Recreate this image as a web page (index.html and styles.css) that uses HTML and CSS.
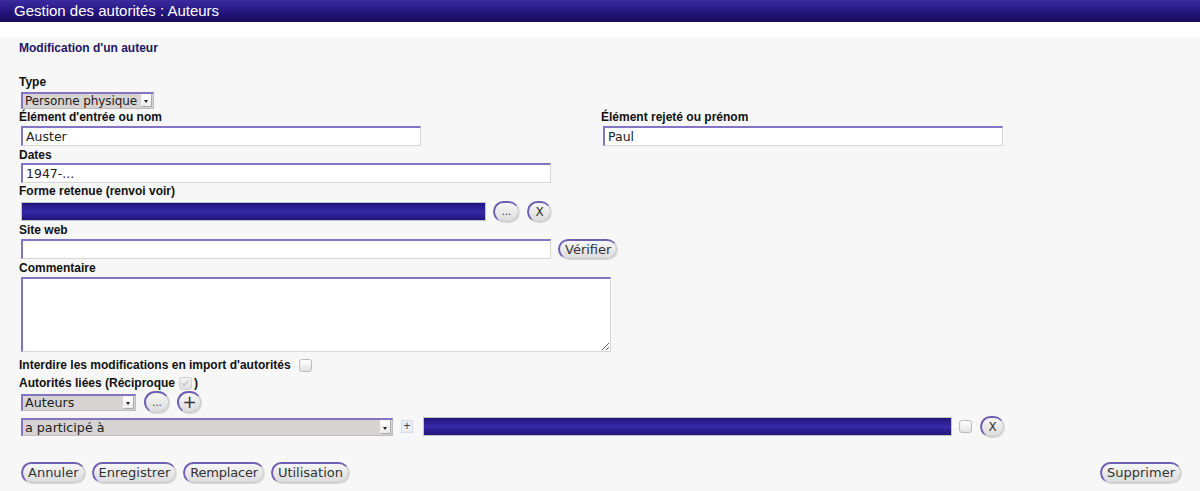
FILE: index.html
```html
<!DOCTYPE html>
<html lang="fr">
<head>
<meta charset="utf-8">
<title>Gestion des autorités : Auteurs</title>
<link rel="stylesheet" href="styles.css">
</head>
<body>
<div class="header">Gestion des autorités : Auteurs</div>
<div class="page">
  <div class="title">Modification d'un auteur</div>

  <div class="lbl">Type</div>
  <div class="select sel-type"><span class="sel-text">Personne physique</span><span class="arrow"></span></div>

  <div class="two-col">
    <div>
      <div class="lbl">Élément d'entrée ou nom</div>
      <input class="inp w400 mt2" type="text" value="Auster">
    </div>
    <div>
      <div class="lbl">Élément rejeté ou prénom</div>
      <input class="inp w400 mt2" type="text" value="Paul">
    </div>
  </div>

  <div class="lbl mt2">Dates</div>
  <input class="inp w530 mt1" type="text" value="1947-...">

  <div class="lbl mt1">Forme retenue (renvoi voir)</div>
  <div class="row row-forme">
    <div class="bar w465"></div>
    <button class="btn round dots">...</button>
    <button class="btn round">X</button>
  </div>

  <div class="lbl">Site web</div>
  <div class="row row-site">
    <input class="inp w530" type="text" value="">
    <button class="btn">Vérifier</button>
  </div>

  <div class="lbl">Commentaire</div>
  <textarea class="area"></textarea>

  <div class="lbl check-line">Interdire les modifications en import d'autorités <span class="cb cb-gap"></span></div>
  <div class="lbl check-line mt4">Autorités liées (Réciproque <span class="cb checked"><svg viewBox="0 0 12 12" width="12" height="12"><path d="M3 6.5 L5 8.5 L9.5 3.5" fill="none" stroke="#c8c8c8" stroke-width="1.4"/></svg></span>)</div>

  <div class="row row-aut">
    <div class="select sel-aut"><span class="sel-text">Auteurs</span><span class="arrow"></span></div>
    <button class="btn round big dots">...</button>
    <button class="btn round big plus">+</button>
  </div>

  <div class="row row-rel">
    <div class="select sel-rel"><span class="sel-text">a participé à</span><span class="arrow"></span></div>
    <span class="mini-plus">+</span>
    <div class="bar w529"></div>
    <span class="cb"></span>
    <button class="btn round">X</button>
  </div>

  <div class="actions">
    <div class="row">
      <button class="btn">Annuler</button>
      <button class="btn">Enregistrer</button>
      <button class="btn">Remplacer</button>
      <button class="btn">Utilisation</button>
    </div>
    <button class="btn">Supprimer</button>
  </div>
</div>
</body>
</html>
```

FILE: styles.css
```css
html, body {
  margin: 0;
  padding: 0;
  background: #ffffff;
  font-family: "Liberation Sans", Arial, sans-serif;
}

.header {
  height: 22px;
  line-height: 22px;
  padding-left: 14px;
  color: #ffffff;
  font-size: 15px;
  background: linear-gradient(#3b2ba0, #22137a 60%, #170b5a);
}

.page {
  margin-top: 15px;
  background: #f7f7f7;
  padding: 4px 19px 8px 19px;
  min-height: calc(100vh - 37px);
  box-sizing: border-box;
}

.title {
  font-size: 12px;
  font-weight: bold;
  line-height: 14px;
  color: #1f1566;
  margin-bottom: 20px;
}

.lbl {
  font-size: 12px;
  font-weight: bold;
  line-height: 14px;
  color: #111;
}

.mt1 { margin-top: 1px; }
.mt2 { margin-top: 2px; }
.mt4 { margin-top: 4px; }

/* inputs */
.inp {
  display: block;
  box-sizing: border-box;
  height: 20px;
  margin-left: 2px;
  padding: 0 3px;
  border: 1px solid #d6d6d6;
  border-top: 2px solid #8475c4;
  border-left: 2px solid #8475c4;
  background: #ffffff;
  font-family: "DejaVu Sans", sans-serif;
  font-size: 12.5px;
  color: #222;
  outline: none;
}
.w400 { width: 400px; }
.w530 { width: 530px; }

.two-col {
  display: grid;
  grid-template-columns: 582px 420px;
}

/* selects */
.select {
  box-sizing: border-box;
  display: flex;
  align-items: stretch;
  margin-left: 2px;
  background: #d7d3d3;
  border: 1px solid #bdbdbd;
  border-top: 2px solid #8475c4;
  border-left: 2px solid #8475c4;
  font-family: "DejaVu Sans", sans-serif;
  font-size: 12px;
  color: #222;
}
.sel-text {
  flex: 1;
  padding-left: 2px;
  line-height: 14px;
  white-space: nowrap;
  overflow: hidden;
}
.arrow {
  width: 9px;
  flex: none;
  margin: 0 1px 1px 0;
  background: linear-gradient(#ffffff, #ececec);
  border: 1px solid #a8a8a8;
  border-top-color: #f4f4f4;
  border-left-color: #f4f4f4;
  position: relative;
}
.arrow::after {
  content: "";
  position: absolute;
  left: 2px;
  top: 5px;
  border-left: 2.5px solid transparent;
  border-right: 2.5px solid transparent;
  border-top: 3px solid #222;
}
.sel-type {
  width: 133px;
  height: 17px;
  margin-top: 3px;
  margin-bottom: 1px;
}
.sel-type .sel-text { letter-spacing: -0.1px; }
.sel-aut {
  width: 115px;
  height: 17px;
  font-size: 12.7px;
}
.sel-rel {
  width: 372px;
  height: 18px;
  font-size: 12.7px;
}
.sel-rel .sel-text { line-height: 15px; }
.sel-rel .arrow::after { top: 6px; }

/* rows */
.row {
  display: flex;
  align-items: center;
}
.row-forme {
  margin-top: 3px;
  margin-bottom: 1px;
  height: 21px;
  gap: 7px;
}
.row-forme .btn + .btn { margin-left: 1px; }
.row-site {
  margin-top: 2px;
  margin-bottom: 2px;
  gap: 7px;
}
.row-aut {
  margin-top: 1px;
  height: 22px;
  gap: 8px;
}
.row-rel {
  margin-top: 3px;
  height: 21px;
  gap: 8px;
}
.row-rel .mini-plus + .bar { margin-left: 2px; }
.row-rel .cb { margin-left: -1px; }

/* blue bar */
.bar {
  box-sizing: border-box;
  height: 19px;
  margin-left: 2px;
  border: 1px solid #c4c4c4;
  background: linear-gradient(#22147c, #3627a4 45%, #3627a4 55%, #22147c);
}
.w465 { width: 465px; }
.w529 { width: 529px; }

/* buttons */
.btn {
  box-sizing: border-box;
  height: 21px;
  padding: 0 5px;
  border-radius: 11px;
  border: 1px solid #c8c8c8;
  border-top: 2px solid #6e5fb0;
  border-left: 2px solid #6e5fb0;
  background: linear-gradient(#f6f6f6, #dcdcdc);
  box-shadow: 1px 1px 1px rgba(0,0,0,0.12);
  font-family: "DejaVu Sans", sans-serif;
  font-size: 13px;
  color: #333;
  line-height: 16px;
  cursor: pointer;
}
.row-site .btn { height: 20px; }
.btn.round {
  width: 24px;
  padding: 0;
  font-size: 12px;
}
.btn.dots {
  width: 26px;
  font-size: 10px;
}
.btn.big {
  width: 25px;
  height: 22px;
}
.btn.plus {
  font-size: 17px;
  line-height: 17px;
  width: 24px;
}

.mini-plus {
  display: inline-block;
  box-sizing: border-box;
  width: 12px;
  height: 13px;
  border: 1px solid #d6dde6;
  background: #e8eef6;
  font-size: 12px;
  line-height: 10px;
  text-align: center;
  color: #444;
}

/* checkboxes */
.check-line {
  display: flex;
  align-items: center;
}
.cb {
  display: inline-block;
  box-sizing: border-box;
  width: 13px;
  height: 13px;
  border: 1px solid #bcbcbc;
  border-radius: 3px;
  background: linear-gradient(#ffffff, #e2e2e2);
  flex: none;
}
.cb-gap { margin-left: 8px; }
.cb.checked {
  margin-left: 4px;
  margin-right: 2px;
  background: linear-gradient(#f4f4f4, #e0e0e0);
  border-color: #d0d0d0;
}
.cb.checked svg { display: block; margin: -1px 0 0 -1px; }

/* textarea */
.area {
  display: block;
  box-sizing: border-box;
  width: 590px;
  height: 75px;
  margin: 2px 0 6px 2px;
  border: 1px solid #d6d6d6;
  border-top: 2px solid #8475c4;
  border-left: 2px solid #8475c4;
  background: #ffffff;
  outline: none;
}

/* bottom */
.actions {
  display: flex;
  justify-content: space-between;
  align-items: center;
  margin-top: 25px;
  padding-left: 2px;
}
.actions .row { gap: 7px; }
.actions .row .btn:nth-child(3) { letter-spacing: -0.2px; }
```
